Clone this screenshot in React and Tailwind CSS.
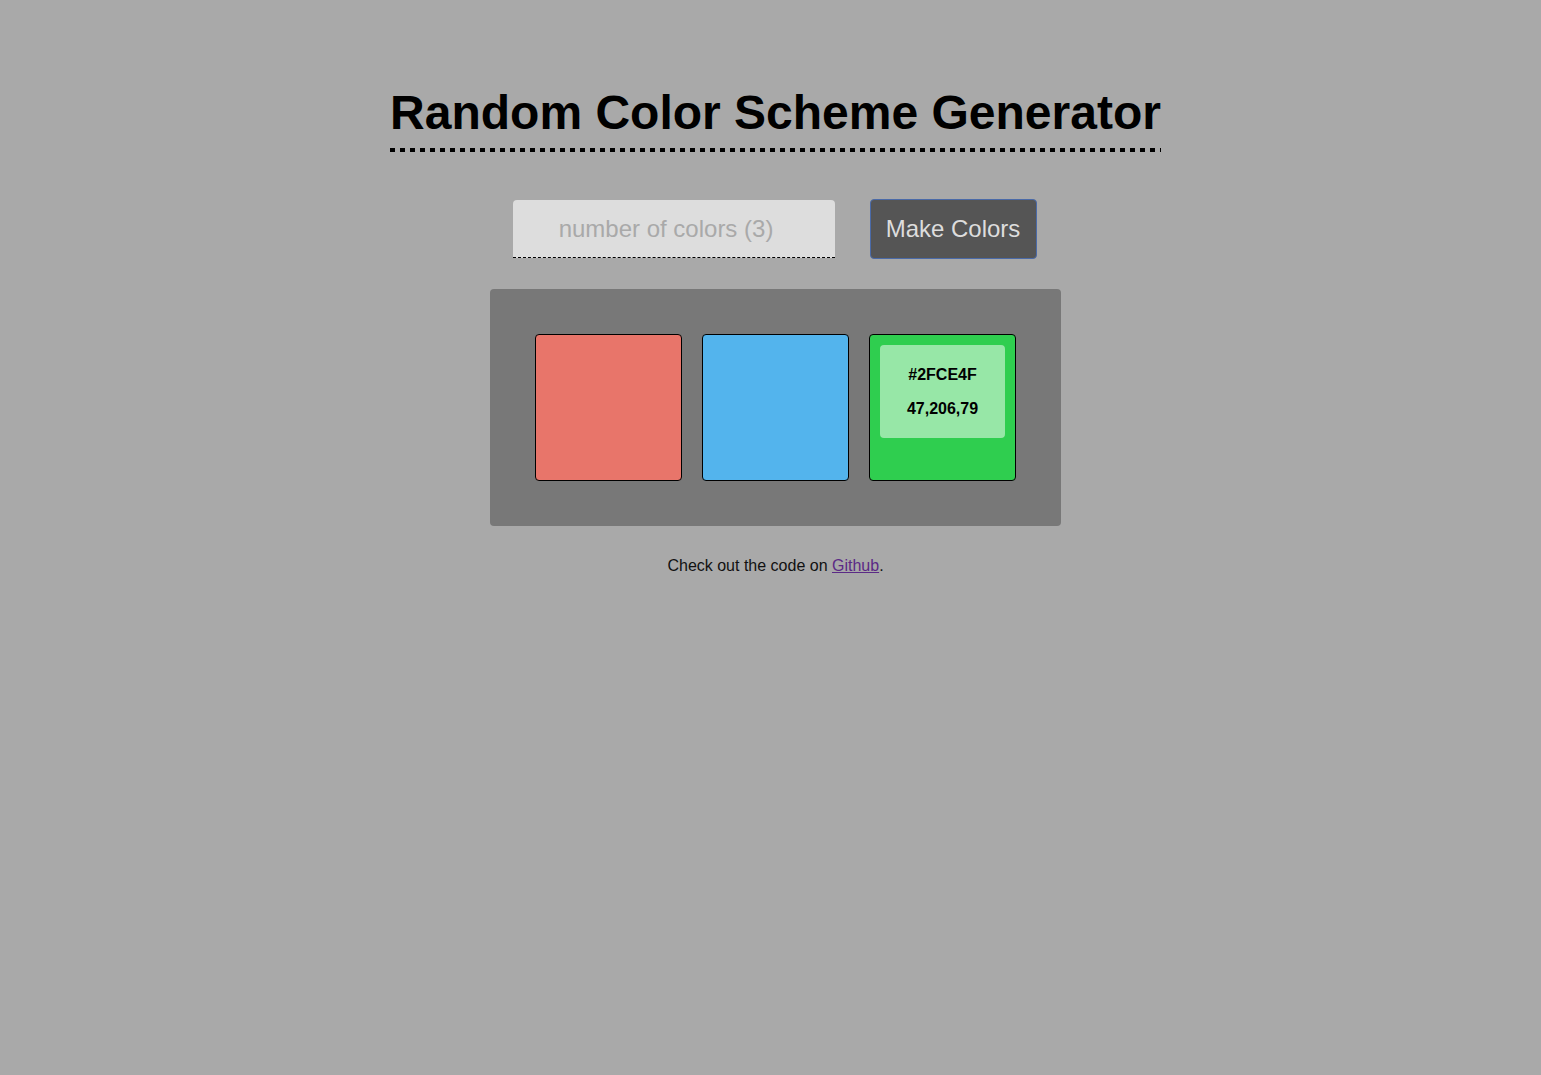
import React from 'react';

const colors = [
  { hex: '#E8756A', rgb: '232,117,106', show: false },
  { hex: '#53B4ED', rgb: '83,180,237', show: false },
  { hex: '#2FCE4F', rgb: '47,206,79', show: true },
];

const App = () => {
  return (
    <div className="min-h-[1075px] bg-[#a9a9a9] flex flex-col items-center pl-[10px] font-['Liberation_Sans',Arial,sans-serif]">
      <div className="mt-[86px] flex flex-col">
        <h1 className="text-[48px] font-bold leading-[54px] text-black pb-[8px]">
          Random Color Scheme Generator
        </h1>
        <span className="h-[4px] w-full bg-[repeating-linear-gradient(to_right,#000_0_5px,transparent_5px_10px)]" />
      </div>

      <div className="mt-[47px] -ml-[2px] flex items-center gap-[35px]">
        <input
          type="text"
          placeholder="number of colors (3)"
          className="w-[322px] h-[58px] bg-[#dddddd] rounded-t-[4px] border-b border-dashed border-black pr-[15px] text-center text-[24px] text-[#333] placeholder:text-[#a9a9a9] outline-none"
        />
        <button className="w-[167px] h-[60px] bg-[#555555] text-[#dddddd] text-[24px] rounded-[4px] border border-[#4a6aa8]">
          Make Colors
        </button>
      </div>

      <div className="mt-[30px] w-[571px] bg-[#787878] rounded-[4px] p-[45px] flex gap-[20px]">
        {colors.map((c) => (
          <div
            key={c.hex}
            className="w-[147px] h-[147px] rounded-[4px] border border-black p-[10px]"
            style={{ backgroundColor: c.hex }}
          >
            {c.show && (
              <div className="h-[93px] rounded-[4px] bg-white/50 flex flex-col items-center justify-center gap-[16px] text-[16px] font-bold text-black leading-[18px]">
                <span>{c.hex}</span>
                <span>{c.rgb}</span>
              </div>
            )}
          </div>
        ))}
      </div>

      <p className="mt-[28px] text-[16px] text-[#111]">
        Check out the code on <a href="#" className="text-[#5b2a86] underline">Github</a>.
      </p>
    </div>
  );
};

export default App;
